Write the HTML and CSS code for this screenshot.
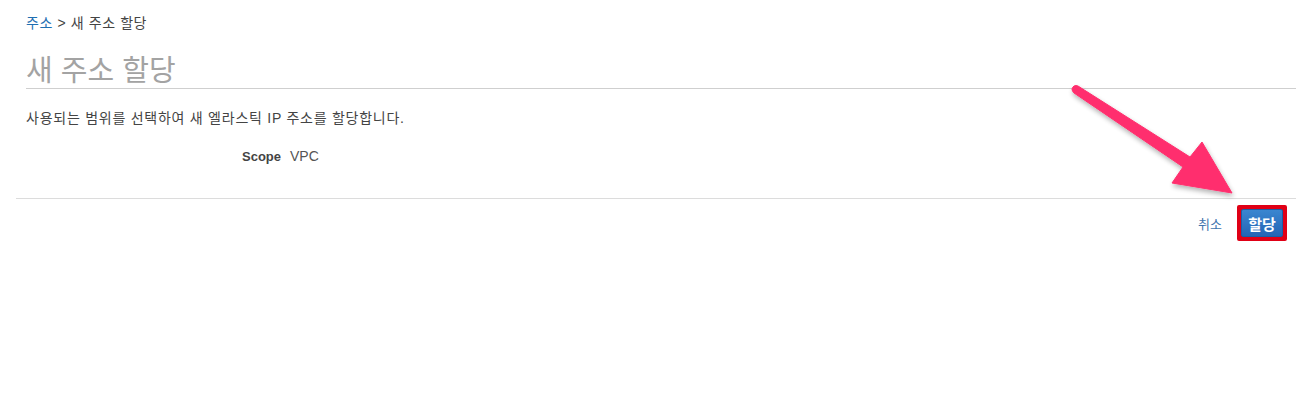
FILE: index.html
```html
<!DOCTYPE html>
<html lang="ko">
<head>
<meta charset="utf-8">
<link rel="stylesheet" href="styles.css">
</head>
<body>
<div class="page">
  <div class="header">
    <div class="crumbs"><a class="crumb-link">주소</a> &gt; 새 주소 할당</div>
    <h1 class="title">새 주소 할당</h1>
  </div>
  <div class="body">
    <p class="desc">사용되는 범위를 선택하여 새 엘라스틱 IP 주소를 할당합니다.</p>
    <div class="field">
      <span class="label">Scope</span>
      <span class="value">VPC</span>
    </div>
  </div>
  <div class="footer">
    <a class="cancel">취소</a>
    <span class="highlight"><button class="primary">할당</button></span>
  </div>
  <svg class="arrow" width="1307" height="400" viewBox="0 0 1307 400">
    <defs>
      <filter id="sh" x="-20%" y="-20%" width="140%" height="140%">
        <feGaussianBlur in="SourceAlpha" stdDeviation="2.5"/>
        <feOffset dx="1" dy="3"/>
        <feComponentTransfer><feFuncA type="linear" slope="0.3"/></feComponentTransfer>
        <feMerge><feMergeNode/><feMergeNode in="SourceGraphic"/></feMerge>
      </filter>
    </defs>
    <path filter="url(#sh)" fill="#ff2f6e" stroke="#ff2f6e" stroke-linejoin="round" stroke-width="1"
      d="M1078 86 L1190 157 L1202 142 L1232 193 L1172 183 L1183 167 L1074 93 Q1070 89 1074 86 Q1076 85 1078 86 Z"/>
  </svg>
</div>
</body>
</html>
```
FILE: styles.css
```css
html, body { margin: 0; padding: 0; background: #fff; }
body { font-family: "Liberation Sans", "Noto Sans CJK KR", Arial, sans-serif; color: #333; }
.page { position: relative; width: 1307px; height: 400px; }
.header { padding: 14px 11px 0 26px; }
.crumbs { font-size: 14px; line-height: 18px; color: #444; letter-spacing: 0.6px; }
.crumb-link { color: #1f6fb2; }
.title {
  margin: 18px 0 0 0;
  font-size: 29px; font-weight: normal; color: #a3a3a3;
  line-height: 36px; padding-bottom: 2px;
  border-bottom: 1px solid #cfcfcf;
  font-family: "Noto Sans CJK KR", sans-serif;
}
.body { padding: 0 11px 0 26px; }
.desc { margin: 20px 0 0 0; font-size: 14px; line-height: 18px; color: #444; letter-spacing: 0.75px; }
.field { display: flex; align-items: baseline; margin-top: 21px; }
.label { width: 255px; text-align: right; font-weight: bold; font-size: 13px; color: #444; }
.value { margin-left: 9px; font-size: 14px; color: #555; }
.footer {
  margin: 34px 11px 0 16px;
  border-top: 1px solid #dcdcdc;
  display: flex; justify-content: flex-end; align-items: center;
  padding: 6px 9px 0 0;
}
.cancel { color: #3f74ad; font-size: 13px; margin-right: 15px; }
.highlight { display: inline-flex; border: 3px solid #e00016; padding: 1px; border-radius: 2px; background: #e00016; }
.primary {
  border: 1px solid #1a5ea8; background: linear-gradient(#3a86d0, #2465b5);
  color: #fff; font-weight: bold; font-size: 15px;
  font-family: "Noto Sans CJK KR", sans-serif;
  width: 42px; height: 28px; padding: 0; border-radius: 2px;
}
.arrow { position: absolute; left: 0; top: 0; pointer-events: none; }
```
